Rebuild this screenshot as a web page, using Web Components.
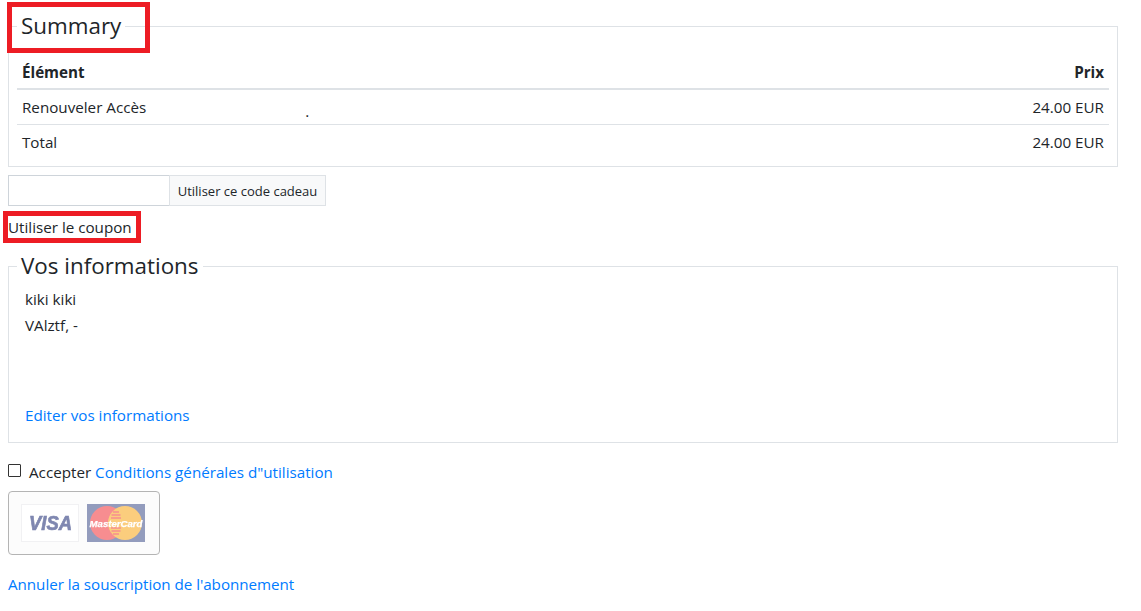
<!DOCTYPE html>
<html lang="fr">
<head>
<meta charset="utf-8">
<title>Summary</title>
<style>
  html, body { background: #fff; }
  body {
    margin: 0;
    font: 15.2px/24px "Open Sans", "Noto Sans", sans-serif;
    color: #212529;
  }
</style>
</head>
<body>
<checkout-page></checkout-page>

<script>
  // red frame drawn over a piece of content
  class RedMark extends HTMLElement {
    constructor() {
      super();
      this.attachShadow({ mode: "open" });
      this.shadowRoot.innerHTML = `
      <style>
        :host { display: inline-block; position: relative; }
        i {
          position: absolute;
          top: var(--top, 0); right: var(--right, 0); bottom: var(--bottom, 0); left: var(--left, 0);
          border: 5px solid #ed1c24;
          pointer-events: none;
        }
      </style>
      <slot></slot><i></i>
    `;
    }
  }
  customElements.define("red-mark", RedMark);

  class InfoPanel extends HTMLElement {
    constructor() {
      super();
      this.attachShadow({ mode: "open" });
      this.shadowRoot.innerHTML = `
      <style>
        :host { display: block; }
        fieldset {
          margin: 0;
          padding: 0 8px;
          border: 1px solid #dee2e6;
          min-width: 0;
        }
        legend {
          padding: 0 4px;
          font-size: 22.4px;
          line-height: 36px;
        }
      </style>
      <fieldset>
        <legend><slot name="title"></slot></legend>
        <slot></slot>
      </fieldset>
    `;
    }
  }
  customElements.define("info-panel", InfoPanel);

  class SummaryTable extends HTMLElement {
    constructor() {
      super();
      this.attachShadow({ mode: "open" });
      this.shadowRoot.innerHTML = `
      <style>
        :host { display: block; padding: 10px 0 7px; }
        table { width: 100%; border-collapse: collapse; }
        th, td { padding: 5px 5px; text-align: left; line-height: 24px; }
        th { font-weight: 700; border-bottom: 2px solid #dee2e6; padding: 6px 5px 4px; }
        tr.item td { border-bottom: 1px solid #dee2e6; height: 24px; }
        .r { text-align: right; }
        .dot { position: relative; left: 159px; top: 4px; }
      </style>
      <table>
        <tr><th>Élément</th><th class="r">Prix</th></tr>
        <tr class="item"><td>Renouveler Accès<span class="dot">.</span></td><td class="r">24.00 EUR</td></tr>
        <tr><td>Total</td><td class="r">24.00 EUR</td></tr>
      </table>
    `;
    }
  }
  customElements.define("summary-table", SummaryTable);

  class CouponForm extends HTMLElement {
    constructor() {
      super();
      this.attachShadow({ mode: "open" });
      this.shadowRoot.innerHTML = `
      <style>
        :host { display: flex; width: 318px; height: 31px; font-size: 13px; }
        input {
          box-sizing: border-box;
          width: 162px;
          height: 31px;
          margin: 0;
          padding: 0 8px;
          border: 1px solid #ced4da;
          border-radius: 0;
          background: #fff;
          outline: 0;
        }
        span {
          box-sizing: border-box;
          flex: 1;
          margin-left: -1px;
          border: 1px solid #dee2e6;
          background: #f8f9fa;
          text-align: center;
          line-height: 30px;
        }
      </style>
      <input type="text" aria-label="code"><span>Utiliser ce code cadeau</span>
    `;
    }
  }
  customElements.define("coupon-form", CouponForm);

  class TermsLine extends HTMLElement {
    constructor() {
      super();
      this.attachShadow({ mode: "open" });
      this.shadowRoot.innerHTML = `
      <style>
        :host { display: flex; align-items: center; height: 24px; }
        i {
          box-sizing: border-box;
          width: 13px; height: 13px;
          margin: -3px 8px 0 0;
          border: 1px solid #333;
          border-radius: 1px;
          background: #fff;
        }
        span { white-space: pre; }
        a { color: #007bff; text-decoration: none; }
      </style>
      <i></i><span>Accepter <a href="#"><slot></slot></a></span>
    `;
    }
  }
  customElements.define("terms-line", TermsLine);

  class PayCards extends HTMLElement {
    constructor() {
      super();
      this.attachShadow({ mode: "open" });
      this.shadowRoot.innerHTML = `
      <style>
        :host {
          display: flex;
          gap: 8px;
          box-sizing: border-box;
          width: 152px;
          height: 64px;
          padding: 12px;
          border: 1px solid #b4b4b4;
          border-radius: 4px;
          background: #fcfcfc;
        }
        svg { display: block; width: 58px; height: 38px; filter: blur(.35px); }
        text { font-family: "Liberation Sans", sans-serif; font-weight: 700; font-style: italic; }
      </style>
      <svg viewBox="0 0 58 38">
        <rect x=".5" y=".5" width="57" height="37" fill="#fff" stroke="#f1f1f3"/>
        <text x="8" y="26" font-size="20" fill="#7f87b0" stroke="#7f87b0" stroke-width=".7" textLength="43" lengthAdjust="spacingAndGlyphs">VISA</text>
      </svg>
      <svg viewBox="0 0 58 38">
        <rect width="58" height="38" fill="#939cbd"/>
        <circle cx="20" cy="19" r="17" fill="#f78d90"/>
        <circle cx="38" cy="19" r="17" fill="#fbcd7d"/>
        <path d="M26 8h6M24.5 11h9M24 14h10M24 24h10M24.5 27h9M26 30h6" stroke="#f78d90" stroke-width="1.3"/>
        <text x="29" y="23" text-anchor="middle" font-size="9.6" fill="#fff" stroke="#fff" stroke-width=".25">MasterCard</text>
      </svg>
    `;
    }
  }
  customElements.define("pay-cards", PayCards);

  class CheckoutPage extends HTMLElement {
    constructor() {
      super();
      this.attachShadow({ mode: "open" });
      this.shadowRoot.innerHTML = `
      <style>
        :host { display: block; box-sizing: border-box; width: 1126px; padding: 8px; }
        a { color: #007bff; text-decoration: none; }
        .summary-mark { --top: -6px; --right: -29px; --bottom: -9px; --left: -14px; background: #fff; }
        .coupon-mark { --top: -4px; --right: -9px; --bottom: -4px; --left: -5px; display: block; width: max-content; }
        coupon-form { margin-top: 8px; }
        .use { margin: 9px 0 0; line-height: 24px; }
        .second { margin-top: 9px; }
        .info { padding: 0 8px 14px; margin-top: 2px; }
        .info p { margin: 0; line-height: 26px; }
        .info .edit { margin-top: 64px; }
        terms-line { margin-top: 17px; }
        pay-cards { margin-top: 7px; }
        .cancel { display: block; margin-top: 17px; letter-spacing: -.04px; }
      </style>
      <info-panel>
        <red-mark slot="title" class="summary-mark">Summary</red-mark>
        <summary-table></summary-table>
      </info-panel>
      <coupon-form></coupon-form>
      <div class="use"><red-mark class="coupon-mark">Utiliser le coupon</red-mark></div>
      <info-panel class="second">
        <span slot="title">Vos informations</span>
        <div class="info">
          <p>kiki kiki</p>
          <p>VAlztf, -</p>
          <p class="edit"><a href="#">Editer vos informations</a></p>
        </div>
      </info-panel>
      <terms-line>Conditions générales d"utilisation</terms-line>
      <pay-cards></pay-cards>
      <a class="cancel" href="#">Annuler la souscription de l'abonnement</a>
    `;
    }
  }
  customElements.define("checkout-page", CheckoutPage);
</script>
</body>
</html>
